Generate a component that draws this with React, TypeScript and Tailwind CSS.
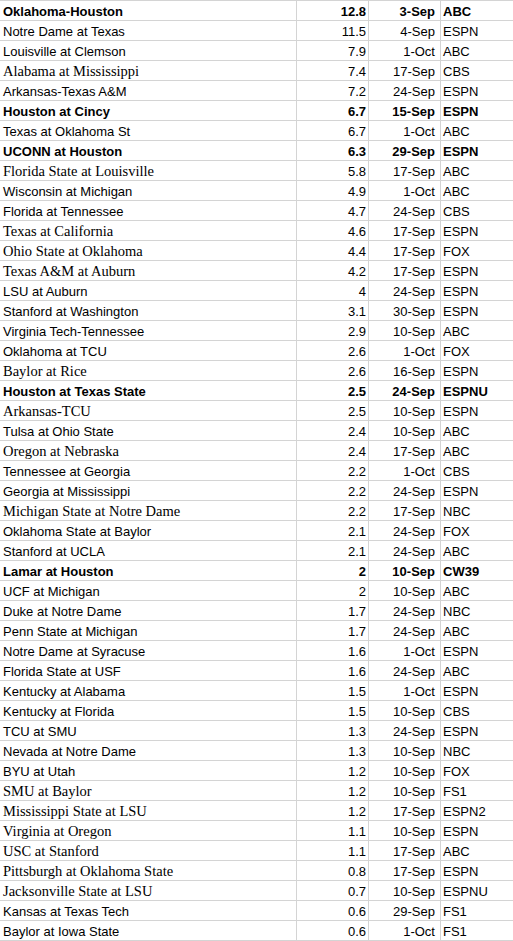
import React from "react";

type Row = [string, string, string, string, ("b" | "s" | "")?];

const rows: Row[] = [
  ["Oklahoma-Houston", "12.8", "3-Sep", "ABC", "b"],
  ["Notre Dame at Texas", "11.5", "4-Sep", "ESPN"],
  ["Louisville at Clemson", "7.9", "1-Oct", "ABC"],
  ["Alabama at Mississippi", "7.4", "17-Sep", "CBS", "s"],
  ["Arkansas-Texas A&M", "7.2", "24-Sep", "ESPN"],
  ["Houston at Cincy", "6.7", "15-Sep", "ESPN", "b"],
  ["Texas at Oklahoma St", "6.7", "1-Oct", "ABC"],
  ["UCONN at Houston", "6.3", "29-Sep", "ESPN", "b"],
  ["Florida State at Louisville", "5.8", "17-Sep", "ABC", "s"],
  ["Wisconsin at Michigan", "4.9", "1-Oct", "ABC"],
  ["Florida at Tennessee", "4.7", "24-Sep", "CBS"],
  ["Texas at California", "4.6", "17-Sep", "ESPN", "s"],
  ["Ohio State at Oklahoma", "4.4", "17-Sep", "FOX", "s"],
  ["Texas A&M at Auburn", "4.2", "17-Sep", "ESPN", "s"],
  ["LSU at Auburn", "4", "24-Sep", "ESPN"],
  ["Stanford at Washington", "3.1", "30-Sep", "ESPN"],
  ["Virginia Tech-Tennessee", "2.9", "10-Sep", "ABC"],
  ["Oklahoma at TCU", "2.6", "1-Oct", "FOX"],
  ["Baylor at Rice", "2.6", "16-Sep", "ESPN", "s"],
  ["Houston at Texas State", "2.5", "24-Sep", "ESPNU", "b"],
  ["Arkansas-TCU", "2.5", "10-Sep", "ESPN", "s"],
  ["Tulsa at Ohio State", "2.4", "10-Sep", "ABC"],
  ["Oregon at Nebraska", "2.4", "17-Sep", "ABC", "s"],
  ["Tennessee at Georgia", "2.2", "1-Oct", "CBS"],
  ["Georgia at Mississippi", "2.2", "24-Sep", "ESPN"],
  ["Michigan State at Notre Dame", "2.2", "17-Sep", "NBC", "s"],
  ["Oklahoma State at Baylor", "2.1", "24-Sep", "FOX"],
  ["Stanford at UCLA", "2.1", "24-Sep", "ABC"],
  ["Lamar at Houston", "2", "10-Sep", "CW39", "b"],
  ["UCF at Michigan", "2", "10-Sep", "ABC"],
  ["Duke at Notre Dame", "1.7", "24-Sep", "NBC"],
  ["Penn State at Michigan", "1.7", "24-Sep", "ABC"],
  ["Notre Dame at Syracuse", "1.6", "1-Oct", "ESPN"],
  ["Florida State at USF", "1.6", "24-Sep", "ABC"],
  ["Kentucky at Alabama", "1.5", "1-Oct", "ESPN"],
  ["Kentucky at Florida", "1.5", "10-Sep", "CBS"],
  ["TCU at SMU", "1.3", "24-Sep", "ESPN"],
  ["Nevada at Notre Dame", "1.3", "10-Sep", "NBC"],
  ["BYU at Utah", "1.2", "10-Sep", "FOX"],
  ["SMU at Baylor", "1.2", "10-Sep", "FS1", "s"],
  ["Mississippi State at LSU", "1.2", "17-Sep", "ESPN2", "s"],
  ["Virginia at Oregon", "1.1", "10-Sep", "ESPN", "s"],
  ["USC at Stanford", "1.1", "17-Sep", "ABC", "s"],
  ["Pittsburgh at Oklahoma State", "0.8", "17-Sep", "ESPN", "s"],
  ["Jacksonville State at LSU", "0.7", "10-Sep", "ESPNU", "s"],
  ["Kansas at Texas Tech", "0.6", "29-Sep", "FS1"],
  ["Baylor at Iowa State", "0.6", "1-Oct", "FS1"],
];

const sans = "font-['Liberation_Sans',Arial,sans-serif] text-[13px]";
const serif = "font-['Liberation_Serif','Times_New_Roman',serif] text-[14.5px]";

export default function App() {
  return (
    <div className="w-[513px] bg-white text-black border-t border-[#d4d4d4]">
      {rows.map(([name, num, date, net, style], i) => {
        const bold = style === "b" ? "font-bold" : "";
        const nameFont = style === "s" ? serif : sans;
        return (
          <div
            key={i}
            className="grid grid-cols-[297px_72px_72px_72px] h-[20px] border-b border-[#d4d4d4]"
          >
            <div
              className={`flex items-end pl-[3px] pb-[1px] leading-[15px] whitespace-nowrap border-r border-[#d4d4d4] ${nameFont} ${bold}`}
            >
              {name}
            </div>
            <div
              className={`flex items-end justify-end pr-[2px] pb-[1px] leading-[15px] border-r border-[#d4d4d4] ${sans} ${bold}`}
            >
              {num}
            </div>
            <div
              className={`flex items-end justify-end pr-[5px] pb-[1px] leading-[15px] border-r border-[#d4d4d4] ${sans} ${bold}`}
            >
              {date}
            </div>
            <div
              className={`flex items-end pl-[2px] pb-[1px] leading-[15px] ${sans} ${bold}`}
            >
              {net}
            </div>
          </div>
        );
      })}
    </div>
  );
}
